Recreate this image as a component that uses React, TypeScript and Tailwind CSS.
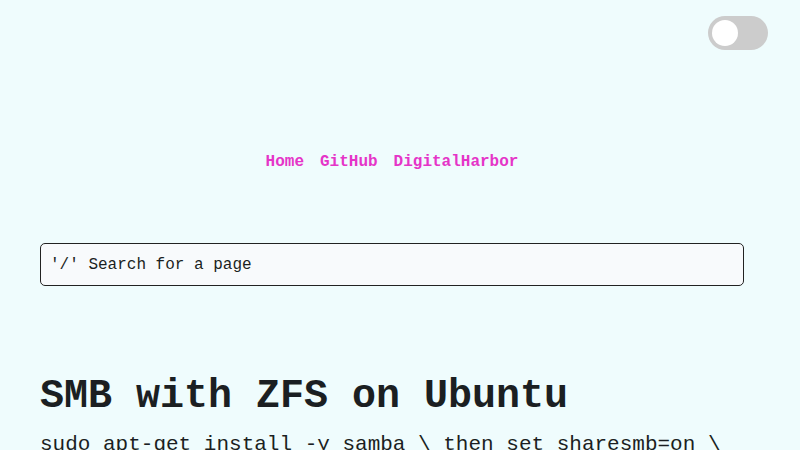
export default function App() {
  return (
    <div className="min-h-screen bg-[#effcfd] text-[#1b1f22] font-['Liberation_Mono',monospace] overflow-hidden">
      <header className="flex justify-end pt-4 pr-8">
        <button className="w-[60px] h-[34px] rounded-full bg-[#cccccc] flex items-center px-1">
          <span className="block w-[26px] h-[26px] rounded-full bg-white" />
        </button>
      </header>

      <nav className="flex justify-center mt-[100px] leading-6">
        <a href="#" className="mr-4 font-bold text-[#e535c8]">Home</a>
        <a href="#" className="mr-4 font-bold text-[#e535c8]">GitHub</a>
        <a href="#" className="mr-4 font-bold text-[#e535c8]">DigitalHarbor</a>
      </nav>

      <div className="pl-10 pr-14 mt-[69px]">
        <div className="h-[43px] border border-[#222] rounded-[5px] bg-[#f8fafc] flex items-center px-[9px] text-base">
          '/' Search for a page
        </div>
      </div>

      <main className="px-10 mt-[87px]">
        <h1 className="text-[40px] leading-[48px] font-bold">SMB with ZFS on Ubuntu</h1>
        <p className="text-[21px] leading-8 mt-2 whitespace-nowrap">
          sudo apt-get install -y samba \ then set sharesmb=on \
        </p>
      </main>
    </div>
  );
}
